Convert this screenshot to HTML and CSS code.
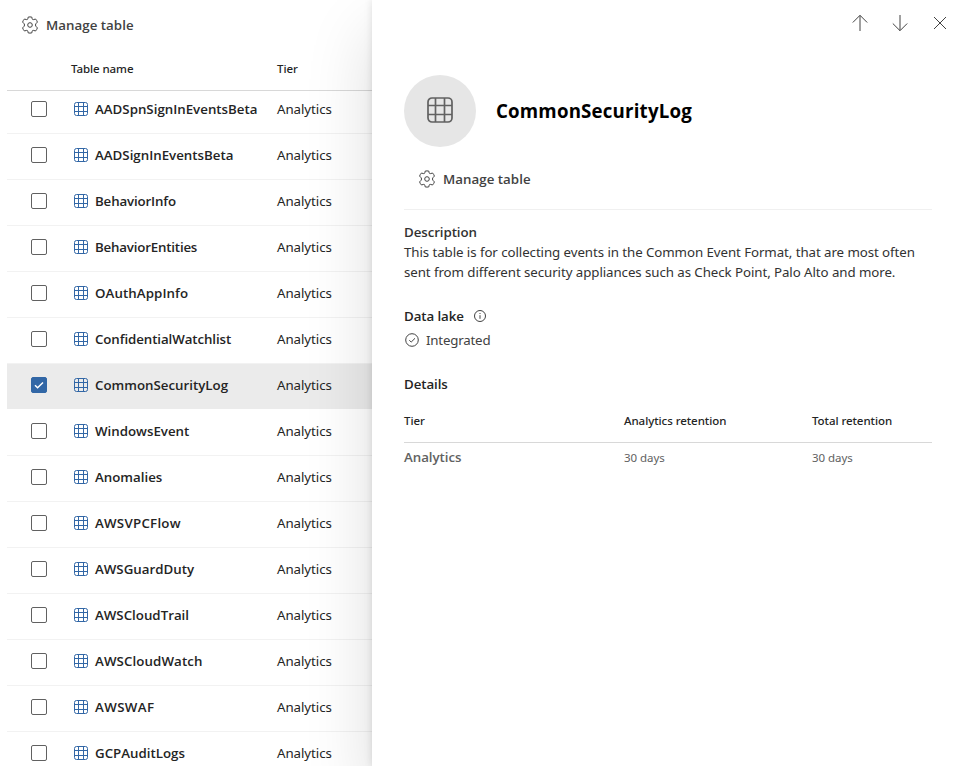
FILE: index.html
```html
<!DOCTYPE html>
<html lang="en">
<head>
<meta charset="utf-8">
<title>Tables</title>
<link rel="stylesheet" href="styles.css">
</head>
<body>
<svg class="sprite" width="0" height="0" aria-hidden="true">
  <symbol id="grid" viewBox="0 0 14 14"><rect x=".5" y=".5" width="13" height="13" rx="2"/><path d="M4.5.5v13M9.5.5v13M.5 4.5h13M.5 9.5h13"/></symbol>
  <symbol id="gear" viewBox="0 0 18 18"><path d="M7.2 1.1Q9 .7 10.8 1.1L11.2 2.9Q11.5 3.9 12.6 3.6L14.5 3Q15.9 4.4 16.4 6.1L15 7.6Q13.8 9 15 10.4L16.4 11.9Q15.9 13.6 14.5 15L12.6 14.4Q11.5 14.1 11.2 15.1L10.8 16.9Q9 17.3 7.2 16.9L6.8 15.1Q6.5 14.1 5.4 14.4L3.5 15Q2.1 13.6 1.6 11.9L3 10.4Q4.2 9 3 7.6L1.6 6.1Q2.1 4.4 3.5 3L5.4 3.6Q6.5 3.9 6.8 2.9Z"/><circle cx="9" cy="9" r="2.3"/></symbol>
</svg>
<div class="app">
  <main class="list-pane">
    <button class="command"><svg class="gear"><use href="#gear"/></svg><span>Manage table</span></button>
    <div class="list-head"><span>Table name</span><span>Tier</span></div>
    <div class="viewport"><div class="rows" id="rows"></div></div>
  </main>
  <aside class="panel">
    <div class="panel-nav">
      <svg width="16" height="18" viewBox="0 0 16 18"><path d="M8 17V1.5M.8 8.5L8 1.3L15.2 8.5"/></svg>
      <svg width="16" height="18" viewBox="0 0 16 18"><path d="M8 1V16.5M.8 9.5L8 16.7L15.2 9.5"/></svg>
      <svg width="16" height="18" viewBox="0 0 16 18"><path d="M2 3L14 15M14 3L2 15"/></svg>
    </div>
    <header class="title">
      <div class="avatar"><svg viewBox="0 0 26 26" width="26" height="26"><rect x="1" y="1" width="24" height="24" rx="4"/><path d="M8.5 1v24M17.5 1v24M1 8.5h24M1 17.5h24"/></svg></div>
      <h1>CommonSecurityLog</h1>
    </header>
    <div class="toolbar"><button class="command"><svg class="gear"><use href="#gear"/></svg><span>Manage table</span></button></div>
    <section class="description">
      <h2>Description</h2>
      <p>This table is for collecting events in the Common Event Format, that are most often<br>sent from different security appliances such as Check Point, Palo Alto and more.</p>
    </section>
    <section class="lake">
      <h2>Data lake <svg width="12" height="12" viewBox="0 0 12 12"><circle cx="6" cy="6" r="5.5"/><path d="M6 5.2v3.6M6 3v1"/></svg></h2>
      <div class="status"><svg width="14" height="14" viewBox="0 0 14 14"><circle cx="7" cy="7" r="6.3"/><path d="M4.3 7.2l1.9 1.9 3.8-3.8"/></svg><span>Integrated</span></div>
    </section>
    <section class="details">
      <h2>Details</h2>
      <div class="grid head"><span>Tier</span><span>Analytics retention</span><span>Total retention</span></div>
      <div class="grid body"><strong>Analytics</strong><span>30 days</span><span>30 days</span></div>
    </section>
  </aside>
</div>
<script src="rows.js"></script>
</body>
</html>
```
FILE: styles.css
```css
* { box-sizing: border-box; }
body { margin: 0; background: #fff; color: #242424; font: 13.3px/20px "Noto Sans", "Open Sans", sans-serif; overflow: hidden; }
h1, h2, p { margin: 0; }
svg { fill: none; stroke: #424242; flex: none; }
.sprite { position: absolute; }
.app { display: flex; width: 961px; height: 766px; overflow: hidden; }
.list-pane { width: 372px; flex: none; padding-left: 7px; height: 766px; overflow: hidden; }
.command { display: flex; align-items: center; gap: 7px; border: 0; background: none; padding: 0; font: 600 13.3px/20px "Open Sans", sans-serif; letter-spacing: .03px; color: #424242; }
.gear { width: 18px; height: 18px; }
.list-pane .command { margin: 15px 0 0 14px; }
.list-head { display: grid; grid-template-columns: 206px 1fr; height: 56px; padding: 24px 0 0 64px; font: 500 11.5px/20px "Noto Sans", sans-serif; letter-spacing: -.08px; border-bottom: 1px solid #d8d8d8; }
.viewport { overflow: hidden; height: 675px; }
.rows { margin-top: -3px; }
.row { display: grid; grid-template-columns: 67px 21px 182px 1fr; align-items: center; height: 46px; padding-bottom: 3px; border-bottom: 1px solid #f2f2f2; }
.row.selected { background: #ebebeb; border-color: #fff; }
.check { width: 16px; height: 16px; margin-left: 24px; border: 1px solid #616161; border-radius: 2px; display: flex; }
.selected .check { background: #3267a6; border-color: #3267a6; }
.check svg { stroke: #fff; stroke-width: 1.5; }
.cell-icon { width: 14px; height: 14px; stroke: #3267a6; }
.name { font: 600 13.3px/20px "Open Sans", sans-serif; white-space: nowrap; }
.tier { letter-spacing: -.06px; }
.panel { position: relative; width: 589px; flex: none; height: 766px; background: #fff; padding: 14px 29px 0 32px; box-shadow: 0 32px 64px rgba(0,0,0,.14), 0 0 8px rgba(0,0,0,.12); }
.panel-nav { display: flex; justify-content: flex-end; gap: 24px; height: 18px; margin-right: -16px; }
.title { display: flex; align-items: center; gap: 20px; height: 72px; margin-top: 43px; }
.avatar { width: 72px; height: 72px; border-radius: 50%; background: #e6e6e6; display: flex; align-items: center; justify-content: center; padding-bottom: 2px; }
.avatar svg { stroke: #616161; stroke-width: 1.7; }
h1 { font: 700 18.7px/28px "Open Sans", sans-serif; letter-spacing: .18px; color: #000; }
.toolbar { height: 63px; padding: 22px 0 0 14px; border-bottom: 1px solid #f0f0f0; }
h2 { font: 600 13.3px/20px "Open Sans", sans-serif; letter-spacing: -.08px; }
.description { margin-top: 12px; height: 84px; color: #323232; white-space: nowrap; letter-spacing: -.075px; }
.lake h2 { display: flex; align-items: center; gap: 10px; }
.status { display: flex; align-items: center; gap: 7px; margin-top: 4px; padding-left: 1px; color: #424242; letter-spacing: -.2px; }
.details { margin-top: 24px; }
.grid { display: grid; grid-template-columns: 220px 188px 1fr; }
.head { height: 49px; padding-top: 17px; border-bottom: 1px solid #d8d8d8; font: 500 11.5px/20px "Noto Sans", sans-serif; letter-spacing: -.06px; }
.body { padding-top: 5px; color: #616161; font-size: 11.5px; letter-spacing: -.04px; }
.body strong { font: 600 13.3px/20px "Open Sans", sans-serif; margin-top: -1px; }
```
FILE: rows.js
```js
// [table name, tracking in px]
const tables = [["AADSpnSignInEventsBeta", 0], ["AADSignInEventsBeta", 0], ["BehaviorInfo", -.15], ["BehaviorEntities", -.19], ["OAuthAppInfo", .08], ["ConfidentialWatchlist", -.09], ["CommonSecurityLog", 0], ["WindowsEvent", 0], ["Anomalies", 0], ["AWSVPCFlow", .25], ["AWSGuardDuty", 0], ["AWSCloudTrail", 0], ["AWSCloudWatch", .1], ["AWSWAF", .4], ["GCPAuditLogs", 0]];
const selected = "CommonSecurityLog";
document.getElementById("rows").innerHTML = tables.map(([n, t]) => `
  <div class="row${n === selected ? " selected" : ""}">
    <span class="check">${n === selected ? '<svg width="14" height="14" viewBox="0 0 14 14"><path d="M3 7.2l2.6 2.6L11 4.5"/></svg>' : ""}</span>
    <svg class="cell-icon"><use href="#grid"/></svg>
    <span class="name" style="letter-spacing:${t}px">${n}</span>
    <span class="tier">Analytics</span>
  </div>`).join("");
```
